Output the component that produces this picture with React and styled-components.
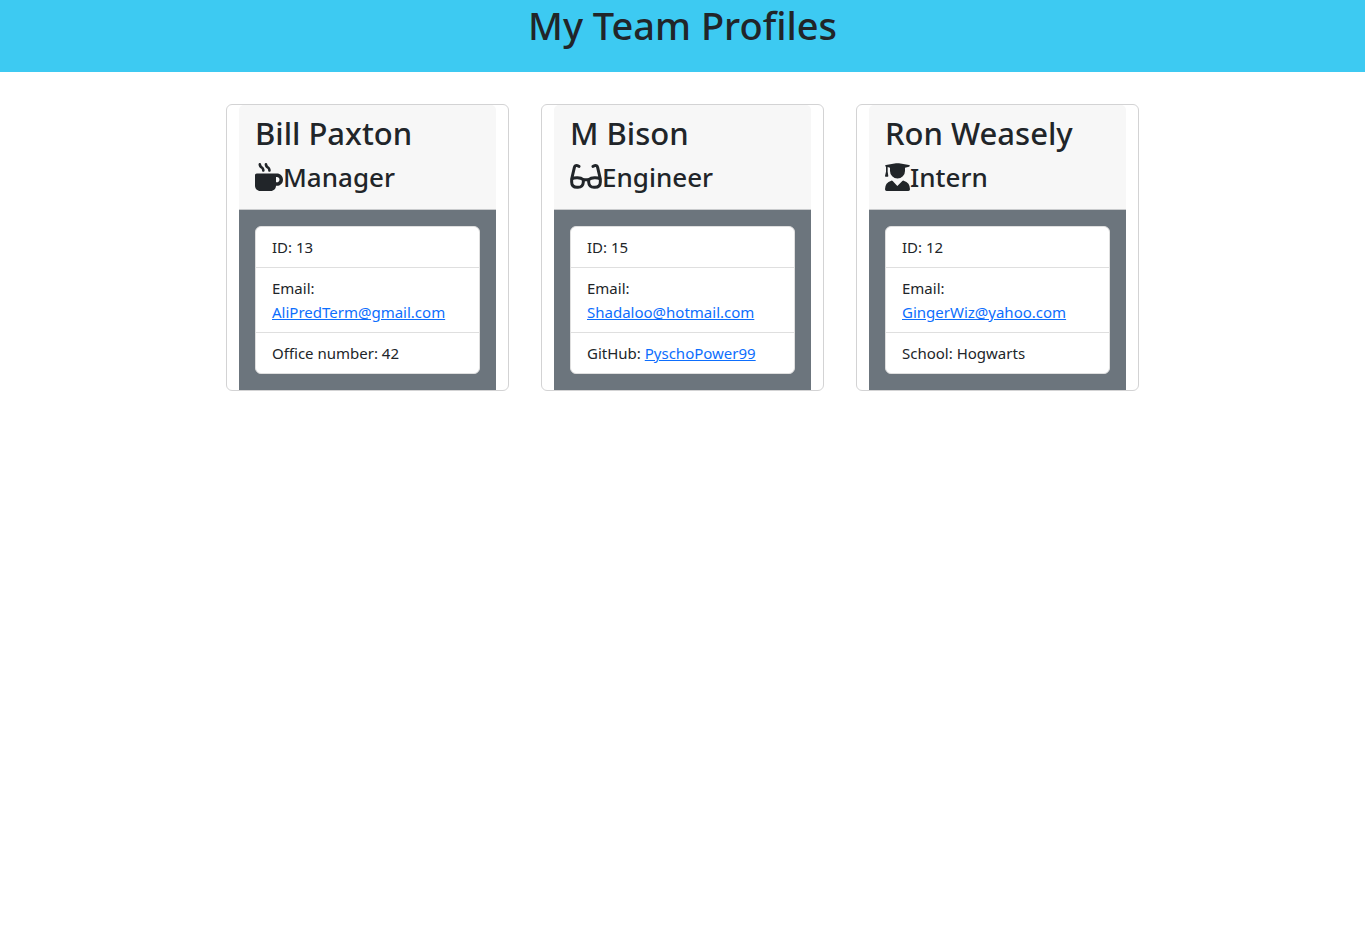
import React from "react";
import styled, { createGlobalStyle } from "styled-components";

const GlobalStyle = createGlobalStyle`
  *, *::before, *::after { box-sizing: border-box; }
  body {
    margin: 0;
    background: #fff;
    color: #212529;
    font-family: "Segoe UI", "Noto Sans", "Open Sans", "Liberation Sans", sans-serif;
    font-size: 15px;
    line-height: 24px;
  }
`;

const Banner = styled.header`
  padding-bottom: 22px;
  background: #3dcaf2;
  text-align: center;
`;

const Title = styled.h1`
  margin: 0;
  font-size: 38px;
  line-height: 50px;
  font-weight: 500;
`;

const Team = styled.main`
  display: flex;
  flex-wrap: wrap;
  justify-content: center;
  gap: 32px;
  padding: 32px 16px;
`;

const Card = styled.article`
  width: 283px;
  padding: 0 12px;
  background: #fff;
  border: 1px solid #d3d3d4;
  border-radius: 6px;
`;

const CardHeader = styled.header`
  padding: 8px 16px 16px;
  background: #f7f7f7;
  border-bottom: 1px solid #c9cbcd;
  border-radius: 5px 5px 0 0;
`;

const Name = styled.h2`
  margin: 0 0 8px;
  font-size: 31px;
  line-height: 40px;
  font-weight: 500;
`;

const Role = styled.h3`
  display: flex;
  align-items: center;
  margin: 0;
  font-size: 26px;
  line-height: 32px;
  font-weight: 500;
`;

const RoleIcon = styled.svg`
  flex: none;
  width: ${({ $width }) => $width}px;
  height: 28px;
  fill: currentColor;
`;

const CardBody = styled.div`
  padding: 16px;
  background: #6c757d;
`;

const Details = styled.ul`
  margin: 0;
  padding: 0;
  list-style: none;
  background: #fff;
  border: 1px solid #dfdfdf;
  border-radius: 6px;
`;

const Detail = styled.li`
  padding: 8px 16px;
  & + & { border-top: 1px solid #dfdfdf; }
`;

const Link = styled.a`
  color: #0d6efd;
  text-decoration: underline;
`;

const MugIcon = () => (
  <RoleIcon $width={28} viewBox="0 0 512 512" aria-hidden="true">
    <path d="M400 192H32C14.25 192 0 206.3 0 224v192c0 53 43 96 96 96h192c53 0 96-43 96-96h16c61.75 0 112-50.25 112-112S461.8 192 400 192zM400 352H384V256h16C426.5 256 448 277.5 448 304S426.5 352 400 352zM107.9 100.7C120.3 107.1 128 121.4 128 136c0 13.25 10.75 23.89 24 23.89S176 148.1 176 135.7c0-31.34-16.83-60.64-43.91-76.45C119.7 52.03 112 38.63 112 24.28c0-13.25-10.75-24.14-24-24.14S64 11.03 64 24.28C64 55.63 80.83 84.92 107.9 100.7zM219.9 100.7C232.3 107.1 240 121.4 240 136c0 13.25 10.75 23.86 24 23.86S288 148.1 288 135.7c0-31.34-16.83-60.64-43.91-76.45C231.7 52.03 224 38.63 224 24.28c0-13.25-10.75-24.18-24-24.18S176 11.03 176 24.28C176 55.63 192.8 84.92 219.9 100.7z" />
  </RoleIcon>
);

const GlassesIcon = () => (
  <RoleIcon $width={32} viewBox="0 0 96 84" aria-hidden="true">
    <g fill="none" stroke="currentColor" strokeWidth="9" strokeLinecap="round" strokeLinejoin="round">
      <path d="M27 10 L22 8 Q15 6 13 14 L5 48 C14 43 31 43 40 50 V57 Q39 73 24 73 H21 Q5 73 5 57 V48" />
      <path d="M69 10 L74 8 Q81 6 83 14 L91 48 C82 43 65 43 56 50 V57 Q57 73 72 73 H75 Q91 73 91 57 V48" />
      <path d="M40 50 H56" />
    </g>
  </RoleIcon>
);

const GraduateIcon = () => (
  <RoleIcon $width={25} viewBox="0 0 75 84" aria-hidden="true">
    <path d="M33 1 Q37 0 42 1 L72 6 Q77 8 72 11 L60 14 V24 A22 22 0 0 1 15 24 V14 L8 12 V26 L10 39 Q10 41 8 41 H2 Q0 41 0 39 L3 26 V11 Q-2 8 3 6 Z" />
    <path d="M19 53 Q21 52 23 54 L37 69 L52 54 Q54 52 56 53 Q75 58 75 79 Q75 84 70 84 H5 Q0 84 0 79 Q0 58 19 53 Z" />
  </RoleIcon>
);

const members = [
  { name: "Bill Paxton", role: "Manager", Icon: MugIcon, id: 13, email: "AliPredTerm@gmail.com", extra: "Office number: 42" },
  { name: "M Bison", role: "Engineer", Icon: GlassesIcon, id: 15, email: "Shadaloo@hotmail.com", extra: <>GitHub: <Link href="https://github.com/PyschoPower99">PyschoPower99</Link></> },
  { name: "Ron Weasely", role: "Intern", Icon: GraduateIcon, id: 12, email: "GingerWiz@yahoo.com", extra: "School: Hogwarts" },
];

export default function App() {
  return (
    <>
      <GlobalStyle />
      <Banner><Title>My Team Profiles</Title></Banner>
      <Team>
        {members.map(({ name, role, Icon, id, email, extra }) => (
          <Card key={name}>
            <CardHeader>
              <Name>{name}</Name>
              <Role><Icon />{role}</Role>
            </CardHeader>
            <CardBody>
              <Details>
                <Detail>ID: {id}</Detail>
                <Detail>Email: <Link href={`mailto:${email}`}>{email}</Link></Detail>
                <Detail>{extra}</Detail>
              </Details>
            </CardBody>
          </Card>
        ))}
      </Team>
    </>
  );
}
